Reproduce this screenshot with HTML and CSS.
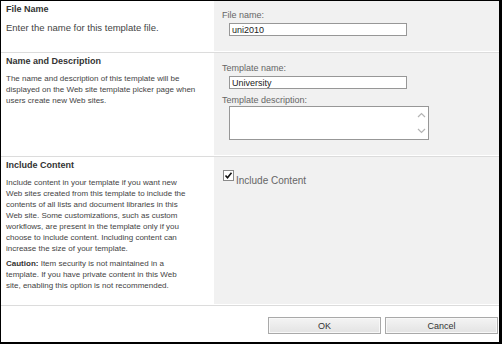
FILE: index.html
```html
<!DOCTYPE html>
<html>
<head>
    <meta charset="UTF-8">
    <title>Save as Template</title>
    <link rel="stylesheet" href="styles.css">
</head>
<body>
    <div class="dialog">
        <!-- File name -->
        <div class="section section-file">
            <div class="info">
                <h3>File Name</h3>
                <p class="lead">Enter the name for this template file.</p>
            </div>
            <div class="controls">
                <label class="field-label" for="file-name">File name:</label>
                <input type="text" id="file-name" class="text-input" value="uni2010">
            </div>
        </div>

        <!-- Name and description -->
        <div class="section section-name">
            <div class="info">
                <h3>Name and Description</h3>
                <p>The name and description of this template will be displayed on the Web site template picker page when users create new Web sites.</p>
            </div>
            <div class="controls">
                <label class="field-label" for="template-name">Template name:</label>
                <input type="text" id="template-name" class="text-input" value="University">
                <label class="field-label spaced" for="template-desc">Template description:</label>
                <div class="textarea-wrap">
                    <textarea id="template-desc" class="text-area"></textarea>
                    <svg class="scroll-arrows" width="9" height="22" viewBox="0 0 9 22">
                        <path d="M1 5 L4.5 1.5 L8 5" fill="none" stroke="#b4b4b4" stroke-width="1.2"/>
                        <path d="M1 17 L4.5 20.5 L8 17" fill="none" stroke="#b4b4b4" stroke-width="1.2"/>
                    </svg>
                </div>
            </div>
        </div>

        <!-- Include content -->
        <div class="section section-content">
            <div class="info">
                <h3>Include Content</h3>
                <p>Include content in your template if you want new Web sites created from this template to include the contents of all lists and document libraries in this Web site. Some customizations, such as custom workflows, are present in the template only if you choose to include content. Including content can increase the size of your template.</p>
                <p class="caution"><strong>Caution:</strong> Item security is not maintained in a template. If you have private content in this Web site, enabling this option is not recommended.</p>
            </div>
            <div class="controls">
                <div class="check-row">
                    <svg class="check-box" width="11" height="11" viewBox="0 0 11 11">
                        <rect x="0.5" y="0.5" width="10" height="10" fill="#fff" stroke="#8a8a8a"/>
                        <path d="M2.5 5.5 L4.5 7.8 L8.5 2.8" fill="none" stroke="#111" stroke-width="1.6"/>
                    </svg>
                    <span class="check-label">Include Content</span>
                </div>
            </div>
        </div>

        <!-- Buttons -->
        <div class="footer">
            <button class="btn">OK</button>
            <button class="btn">Cancel</button>
        </div>
    </div>
</body>
</html>
```
FILE: styles.css
```css
/* Page */
body {
    margin: 0;
    font-family: "Liberation Sans", Arial, sans-serif;
    background-color: #ffffff;
}

.dialog {
    width: 498px;
    height: 341px;
    border-style: solid;
    border-color: #000000;
    border-width: 1px 3px 2px 1px;
    display: flex;
    flex-direction: column;
    background-color: #ffffff;
}

/* Sections */
.section {
    display: grid;
    grid-template-columns: 213px 1fr;
    border-bottom: 1px solid #dcdcdc;
    padding-bottom: 1px;
}

.section-file { height: 50px; }
.section-name { height: 102px; }
.section-content { height: 147px; }

/* Left side: title and help text */
.info {
    padding: 3px 24px 0 5px;
    color: #444444;
}

.section-name .info {
    padding-right: 10px;
}

.info h3 {
    margin: 0 0 6px;
    font-size: 9px;
    line-height: 11px;
    font-weight: bold;
    color: #333333;
}

.info p {
    margin: 0;
    font-size: 8px;
    line-height: 11px;
}

.info p.lead {
    font-size: 9.5px;
    margin-top: 7px;
}

.info p.caution {
    margin-top: 4px;
}

.info strong {
    color: #333333;
}

/* Right side: controls */
.controls {
    background-color: #f1f1f1;
    padding: 9px 8px 0;
}

.section-name .controls {
    padding-top: 10px;
}

.field-label {
    display: block;
    font-size: 9px;
    line-height: 11px;
    color: #666666;
}

.field-label.spaced {
    margin-top: 6px;
}

.text-input {
    display: block;
    margin: 2px 0 0 7px;
    width: 178px;
    height: 13px;
    box-sizing: border-box;
    border: 1px solid #979797;
    padding: 0 2px;
    font-family: "Liberation Sans", Arial, sans-serif;
    font-size: 9px;
    color: #222222;
    background-color: #ffffff;
    outline: none;
}

.textarea-wrap {
    position: relative;
    width: 200px;
    height: 34px;
    margin-left: 7px;
}

.text-area {
    display: block;
    width: 200px;
    height: 34px;
    box-sizing: border-box;
    border: 1px solid #979797;
    resize: none;
    overflow: hidden;
    background-color: #ffffff;
    margin: 0;
    outline: none;
}

.scroll-arrows {
    position: absolute;
    right: 3px;
    top: 6px;
}

/* Checkbox */
.check-row {
    display: flex;
    align-items: flex-start;
    margin: 4px 0 0 1px;
}

.check-box {
    flex-shrink: 0;
}

.check-label {
    margin-left: 2px;
    padding-top: 5px;
    font-size: 10px;
    line-height: 11px;
    color: #666666;
}

/* Footer buttons */
.footer {
    flex: 1;
    display: flex;
    justify-content: flex-end;
    align-items: flex-start;
    gap: 4px;
    padding: 11px 1px 0 0;
}

.btn {
    width: 113px;
    height: 17px;
    padding: 0;
    border: 1px solid #a9a9a9;
    background: linear-gradient(#f4f4f4, #e3e3e3);
    box-shadow: inset 0 0 0 1px #f8f8f8;
    font-family: "Liberation Sans", Arial, sans-serif;
    font-size: 9px;
    color: #333333;
}
```
